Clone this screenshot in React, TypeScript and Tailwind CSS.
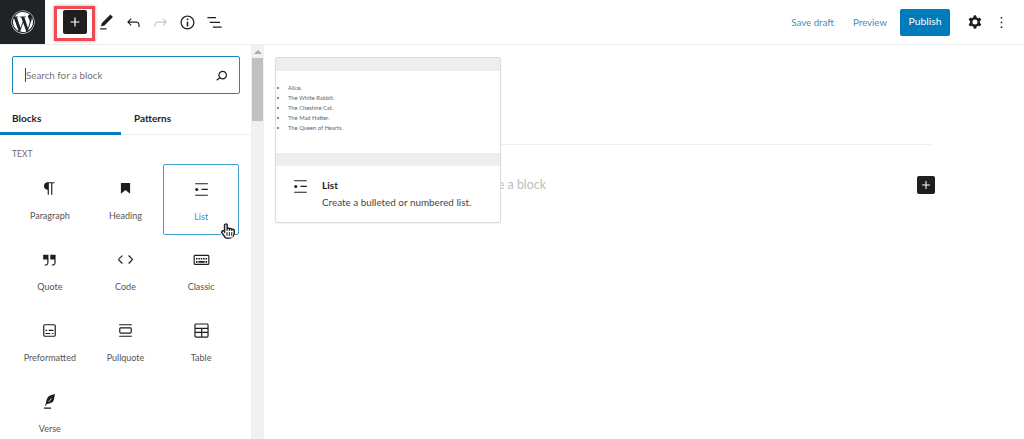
import { FaWordpress, FaRegHandPointer } from "react-icons/fa"

const paths = {
    plus: "M18 11.2h-5.2V6h-1.6v5.2H6v1.6h5.2V18h1.6v-5.2H18z",
    pencil: "M20.1 5.1L16.9 2 6.2 12.7l-1.3 4.4 4.5-1.3L20.1 5.1zM4 20.8h8v-1.5H4v1.5z",
    undo: "M18.3 11.7c-.6-.6-1.4-.9-2.3-.9H6.7l2.9-3.3-1.1-1-4.5 5L8.5 16l1-1-2.7-2.7H16c.5 0 .9.2 1.3.5 1 1 1 3.4 1 4.5v.3h1.5v-.2c0-1.5 0-4.3-1.5-5.7z",
    redo: "M15.6 6.5l-1.1 1 2.9 3.3H8c-.9 0-1.7.3-2.3.9-1.4 1.5-1.4 4.2-1.4 5.6v.2h1.5v-.3c0-1.1 0-3.5 1-4.5.3-.3.7-.5 1.3-.5h9.2L14.5 15l1.1 1.1 4.6-4.6-4.6-5z",
    info: "M12 3.2c-4.8 0-8.8 3.9-8.8 8.8 0 4.8 3.9 8.8 8.8 8.8 4.8 0 8.8-3.9 8.8-8.8 0-4.8-4-8.8-8.8-8.8zm0 16c-4 0-7.2-3.3-7.2-7.2C4.8 8 8 4.8 12 4.8s7.2 3.3 7.2 7.2c0 4-3.2 7.2-7.2 7.2zM11 17h2v-6h-2v6zm0-8h2V7h-2v2z",
    listView: "M3 5h11v1.6H3zM6 11h13v1.6H6zM10 17h11v1.6H10z",
    search: "M13.5 6C10.5 6 8 8.5 8 11.5c0 1.1.3 2.1.9 3l-3.4 3 1 1.1 3.4-2.9c1 .9 2.2 1.4 3.6 1.4 3 0 5.5-2.5 5.5-5.5C19 8.5 16.5 6 13.5 6zm0 9.5c-2.2 0-4-1.8-4-4s1.8-4 4-4 4 1.8 4 4-1.8 4-4 4z",
    cog: "M10.289 4.836A1 1 0 0111.275 4h1.306a1 1 0 01.987.836l.244 1.466c.787.26 1.503.679 2.108 1.218l1.393-.522a1 1 0 011.216.437l.653 1.13a1 1 0 01-.23 1.273l-1.148.944a6.025 6.025 0 010 2.435l1.149.946a1 1 0 01.23 1.272l-.653 1.13a1 1 0 01-1.216.437l-1.394-.522c-.605.54-1.32.958-2.108 1.218l-.244 1.466a1 1 0 01-.987.836h-1.306a1 1 0 01-.986-.836l-.244-1.466a5.995 5.995 0 01-2.108-1.218l-1.394.522a1 1 0 01-1.217-.436l-.653-1.131a1 1 0 01.23-1.272l1.149-.946a6.026 6.026 0 010-2.435l-1.148-.944a1 1 0 01-.23-1.272l.653-1.131a1 1 0 011.217-.437l1.393.522a5.994 5.994 0 012.108-1.218l.244-1.466zM14.929 12a3 3 0 11-6 0 3 3 0 016 0z",
    dots: "M13 19h-2v-2h2v2zm0-6h-2v-2h2v2zm0-6h-2V5h2v2z",
    paragraph: "M18.3 4H9.9v-.1l-.9.2c-2.3.4-4 2.4-4 4.8s1.7 4.4 4 4.8l.7.1V20h1.5V5.5h2.9V20h1.5V5.5h2.7V4z",
    heading: "M6.2 5.2v13.4l5.8-4.8 5.8 4.8V5.2z",
    list: "M4 4v1.5h16V4H4zm8 8.5h8V11h-8v1.5zM4 20h16v-1.5H4V20zm4-8c0-1.1-.9-2-2-2s-2 .9-2 2 .9 2 2 2 2-.9 2-2z",
    quote: "M13 6v6h5.2v4c0 .8-.2 1.4-.5 1.7-.6.6-1.6.6-2.5.5h-.3v1.5h.5c1 0 2.3-.1 3.3-1 .6-.6 1-1.6 1-2.8V6H13zm-9 6h5.2v4c0 .8-.2 1.4-.5 1.7-.6.6-1.6.6-2.5.5h-.3v1.5h.5c1 0 2.3-.1 3.3-1 .6-.6 1-1.6 1-2.8V6H4v6z",
    code: "M20.8 10.7l-4.3-4.3-1.1 1.1 4.3 4.3c.1.1.1.3 0 .4l-4.3 4.3 1.1 1.1 4.3-4.3c.7-.8.7-1.9 0-2.6zM4.2 11.8l4.3-4.3-1-1-4.3 4.3c-.7.7-.7 1.8 0 2.5l4.3 4.3 1.1-1.1-4.3-4.3c-.2-.1-.2-.3-.1-.4z",
    classic: "M20 6H4c-1.1 0-2 .9-2 2v9c0 1.1.9 2 2 2h16c1.1 0 2-.9 2-2V8c0-1.1-.9-2-2-2zm.5 11c0 .3-.2.5-.5.5H4c-.3 0-.5-.2-.5-.5V8c0-.3.2-.5.5-.5h16c.3 0 .5.2.5.5v9zM10 10H8v2h2v-2zm-5 2h2v-2H5v2zm8-2h-2v2h2v-2zm-5 6h8v-2H8v2zm6-4h2v-2h-2v2zm3 0h2v-2h-2v2zm0 4h2v-2h-2v2zM5 16h2v-2H5v2z",
    preformatted: "M18 4H6c-1.1 0-2 .9-2 2v12c0 1.1.9 2 2 2h12c1.1 0 2-.9 2-2V6c0-1.1-.9-2-2-2zm.5 14c0 .3-.2.5-.5.5H6c-.3 0-.5-.2-.5-.5V6c0-.3.2-.5.5-.5h12c.3 0 .5.2.5.5v12zM7 16.5h6V15H7v1.5zm4-4h6V11h-6v1.5zM9 11H7v1.5h2V11zm6 5.5h2V15h-2v1.5z",
    pullquote: "M18 8H6c-1.1 0-2 .9-2 2v4c0 1.1.9 2 2 2h12c1.1 0 2-.9 2-2v-4c0-1.1-.9-2-2-2zm.5 6c0 .3-.2.5-.5.5H6c-.3 0-.5-.2-.5-.5v-4c0-.3.2-.5.5-.5h12c.3 0 .5.2.5.5v4zM4 4v1.5h16V4H4zm0 16h16v-1.5H4V20z",
    table: "M19 3H5c-1.1 0-2 .9-2 2v14c0 1.1.9 2 2 2h14c1.1 0 2-.9 2-2V5c0-1.1-.9-2-2-2zM5 4.5h14c.3 0 .5.2.5.5v3.5h-15V5c0-.3.2-.5.5-.5zm8 5.5h6.5v3.5H13V10zm-1.5 3.5h-7V10h7v3.5zm-7 5.5v-4h7v4.5H5c-.3 0-.5-.2-.5-.5zm14.5.5h-6V15h6.5v4c0 .3-.2.5-.5.5z",
    verse: "M19 2.5c-3 .6-6.5 1.6-8.3 3.3C8.9 7.6 7.9 11 7.4 14.2L6.3 17l1.2.5 1-2.5c2.4-.2 5.6-1 7.4-2.4 1.9-1.6 2.3-6.3 3.1-10.1zM10.6 12.2l3.6-4.2.6.5-3.6 4.2zM5 21h9v-1.5H5z",
}

type IconName = keyof typeof paths

function Icon({ name, className = "w-[19px] h-[19px]" }: { name: IconName, className?: string }) {
    return (
        <svg viewBox="0 0 24 24" fill="currentColor" fillRule="evenodd" className={className}>
            <path d={paths[name]} />
        </svg>
    )
}

const blocks: { name: IconName, label: string }[] = [
    { name: "paragraph", label: "Paragraph" },
    { name: "heading", label: "Heading" },
    { name: "list", label: "List" },
    { name: "quote", label: "Quote" },
    { name: "code", label: "Code" },
    { name: "classic", label: "Classic" },
    { name: "preformatted", label: "Preformatted" },
    { name: "pullquote", label: "Pullquote" },
    { name: "table", label: "Table" },
    { name: "verse", label: "Verse" },
]

const characters = ["Alice.", "The White Rabbit.", "The Cheshire Cat.", "The Mad Hatter.", "The Queen of Hearts."]

function Header() {
    return (
        <header className="h-[45px] shrink-0 flex items-center border-b border-[#eeeeee] bg-white">
            <div className="w-[45px] h-[44px] bg-[#1e2327] flex items-center justify-center text-white">
                <FaWordpress size={24} />
            </div>

            <div className="relative ml-[18px] w-6 h-6 rounded-[2px] bg-[#1e1e1e] text-white flex items-center justify-center">
                <Icon name="plus" className="w-[18px] h-[18px]" />
                <div className="absolute -left-[9px] -top-[4px] w-[41px] h-[35px] border-[3px] border-[#ee4a50] shadow-[0_0_3px_rgba(0,0,0,0.35)]" />
            </div>

            <div className="ml-[6px] flex items-center text-[#1e1e1e]">
                <div className="w-[27px] flex justify-center"><Icon name="pencil" /></div>
                <div className="w-[27px] flex justify-center"><Icon name="undo" /></div>
                <div className="w-[27px] flex justify-center text-[#c8c8c8]"><Icon name="redo" /></div>
                <div className="w-[27px] flex justify-center"><Icon name="info" /></div>
                <div className="w-[27px] flex justify-center"><Icon name="listView" /></div>
            </div>

            <div className="ml-auto flex items-center text-[9.7px] text-[#3f8fbd]">
                <span>Save draft</span>
                <span className="ml-[19px]">Preview</span>
                <button className="ml-[13px] w-[50px] h-[27px] rounded-[2px] bg-[#007cba] text-white text-[10.4px]">Publish</button>
                <div className="ml-[15px] w-[20px] flex justify-center text-[#1e1e1e]"><Icon name="cog" className="w-[20px] h-[20px]" /></div>
                <div className="ml-[7px] mr-[13px] w-[19px] flex justify-center text-[#1e1e1e]"><Icon name="dots" /></div>
            </div>
        </header>
    )
}

function Sidebar() {
    return (
        <aside className="w-[264px] shrink-0 flex bg-white overflow-hidden">
            <div className="w-[251px] shrink-0 flex flex-col">
                <div className="px-3 pt-[11px]">
                    <div className="h-[38px] w-[228px] rounded-[2px] border-[1.5px] border-[#1b87bd] flex items-center pl-3 pr-[8px]">
                        <span className="w-px h-[14px] bg-[#444444]" />
                        <span className="pt-[1px] text-[9.8px] text-[#757575]">Search for a block</span>
                        <span className="ml-auto text-[#1e1e1e]"><Icon name="search" className="w-[19px] h-[19px]" /></span>
                    </div>
                </div>

                <div className="mt-[10px] h-[31px] flex border-b border-[#eeeeee] text-[10px] font-bold text-[#1e1e1e]">
                    <div className="w-[121px] pl-3 pt-[7px] border-b-[3px] border-[#007cba] h-[31px]">Blocks</div>
                    <div className="pl-[13px] pt-[7px]">Patterns</div>
                </div>

                <div className="mt-[13px] pl-3 text-[8.5px] leading-3 text-[#6b6b6b] uppercase">Text</div>

                <div className="mt-[4px] ml-3 w-[227px] grid grid-cols-3 auto-rows-[71px]">
                    {blocks.map((block) => {
                        const selected = block.label === "List"
                        return (
                            <div
                                key={block.label}
                                className={`h-[71px] flex flex-col items-center pt-[15px] text-[#1e1e1e] ${selected ? "border border-[#3f9ccb] rounded-[2px]" : ""}`}
                            >
                                <Icon name={block.name} />
                                <span className={`mt-[12px] text-[9px] leading-3 whitespace-nowrap ${selected ? "text-[#3f8fbd]" : "text-[#555555]"}`}>
                                    {block.label}
                                </span>
                            </div>
                        )
                    })}
                </div>
            </div>

            <div className="flex-1 bg-[#f1f1f1] flex flex-col items-center">
                <div className="mt-[5px] w-0 h-0 border-x-[4px] border-x-transparent border-b-[4px] border-b-[#a8a8a8]" />
                <div className="mt-[4px] w-[11px] h-[63px] bg-[#c1c1c1]" />
            </div>
        </aside>
    )
}

function BlockPreview() {
    return (
        <div className="absolute left-[11px] top-[12px] w-[226px] h-[166px] bg-white border border-[#dddddd] rounded-[2px] shadow-[0_1px_2px_rgba(0,0,0,0.06)] flex flex-col">
            <div className="h-[13px] bg-[#eeeeee]" />
            <ul className="h-[82px] pt-[12px] pl-[12px] list-disc text-[5.8px] leading-[10px] text-[#666666]">
                {characters.map((name) => <li key={name}>{name}</li>)}
            </ul>
            <div className="h-[13px] bg-[#eeeeee]" />
            <div className="flex-1 flex pl-[15px] pt-[10px]">
                <Icon name="list" className="w-[19px] h-[19px] text-[#1e1e1e] mt-[1px]" />
                <div className="ml-[12px]">
                    <div className="text-[10px] leading-[18px] font-bold text-[#1e1e1e]">List</div>
                    <div className="text-[9.9px] leading-[16px] text-[#444444] whitespace-nowrap">Create a bulleted or numbered list.</div>
                </div>
            </div>
        </div>
    )
}

export default function App() {
    return (
        <div className="relative w-[1024px] h-[439px] bg-white flex flex-col overflow-hidden font-['Lato',sans-serif]">
            <Header />
            <div className="flex-1 flex min-h-0">
                <Sidebar />
                <main className="relative flex-1 pl-[11px]">
                    <div className="mt-[99px] w-[656px] border-t border-[#f0f0f0]" />
                    <div className="mt-[31px] w-[660px] flex items-center justify-between">
                        <span className="w-[271px] text-right text-[12.4px] leading-[18px] text-[#bdbdbd]">Type / to choose a block</span>
                        <div className="w-[18px] h-[18px] rounded-[2px] bg-[#1e1e1e] text-white flex items-center justify-center">
                            <Icon name="plus" className="w-[16px] h-[16px]" />
                        </div>
                    </div>
                    <BlockPreview />
                </main>
            </div>
            <div className="absolute left-[220px] top-[223px] text-[#222222]">
                <FaRegHandPointer size={16} className="bg-white rounded-full" />
            </div>
        </div>
    )
}
